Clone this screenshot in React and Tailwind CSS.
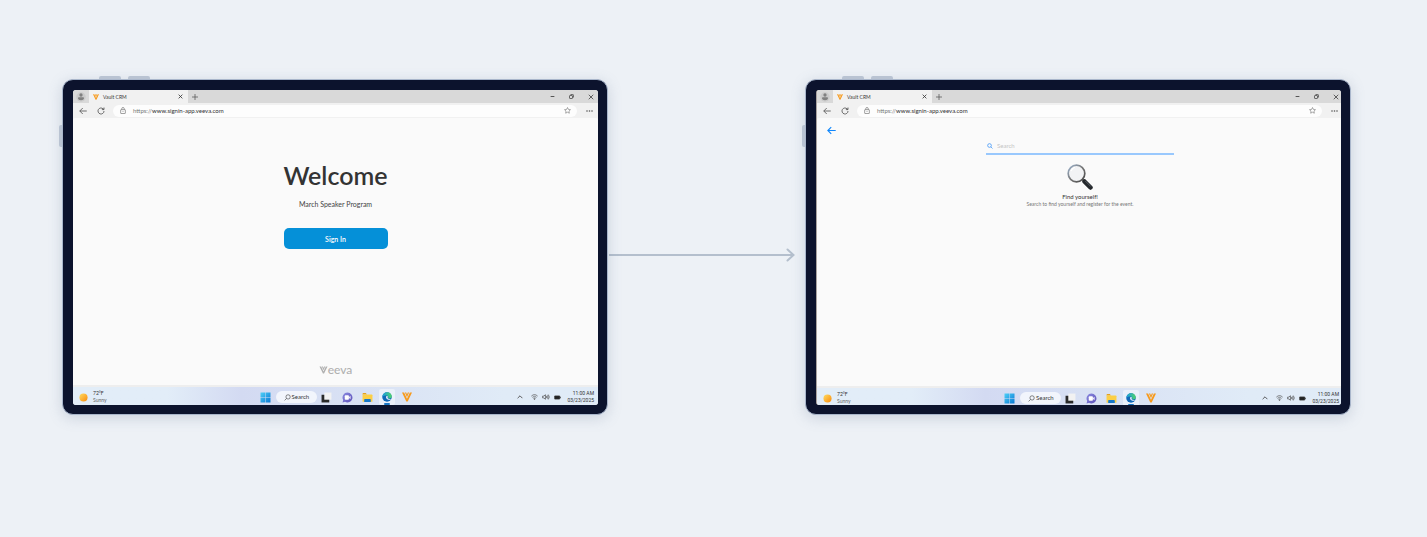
import React from "react";

const VeevaMark = ({ className }) => (
  <svg viewBox="0 0 20 20" className={className} fill="currentColor" aria-hidden="true">
    <path d="M0 1h4.200L10 13.500 15.800 1H20l-8.600 18H8.600z" />
    <path d="M5.800 1h2.700L10 4.800 11.500 1h2.700L10 10.500z" />
  </svg>
);

const ArrowLeft = ({ className }) => (
  <svg viewBox="0 0 16 16" className={className} fill="none" stroke="currentColor" aria-hidden="true">
    <path d="M15.500 8H1.500M7.500 2L1.500 8l6 6" />
  </svg>
);

const Lens = ({ className }) => (
  <svg viewBox="0 0 12 12" className={className} fill="none" stroke="currentColor" aria-hidden="true">
    <circle cx="5" cy="5" r="3.7" />
    <path d="M7.8 7.8L11 11" />
  </svg>
);

function TabBar() {
  return (
    <div className="flex h-[13px] items-stretch bg-[#d9d9d9] text-[#3a3a3a]">
      <button aria-label="Profile" className="flex w-4 items-center justify-center">
        <svg viewBox="0 0 20 20" className="size-[10px]">
          <circle cx="10" cy="10" r="9.5" fill="#cbcbcb" />
          <circle cx="10" cy="6" r="3.3" fill="#808080" />
          <path d="M4 12.5c0-1.5 1-2.2 2.4-2.2h7.2c1.4 0 2.4.7 2.4 2.2 0 2.6-2.6 4-6 4s-6-1.4-6-4z" fill="#808080" />
        </svg>
      </button>
      <div className="flex w-[99px] items-center bg-[#f1f1f1] pl-1">
        <VeevaMark className="size-[6px] text-[#f79a1c]" />
        <span className="ml-1 grow text-[5px] leading-[8px]">Vault CRM</span>
        <button aria-label="Close tab" className="mr-1 flex size-[7px] items-center justify-center">
          <svg viewBox="0 0 8 8" className="size-[5px]" stroke="#333" strokeWidth="1.3"><path d="M1 1l6 6M7 1L1 7" /></svg>
        </button>
      </div>
      <button aria-label="New tab" className="flex w-[14px] items-center justify-center">
        <svg viewBox="0 0 8 8" className="size-[6px]" stroke="#555" strokeWidth="1"><path d="M4 0v8M0 4h8" /></svg>
      </button>
      <div className="ml-auto flex items-center gap-3 pr-1">
        <button aria-label="Minimize" className="flex size-[7px] items-center justify-center">
          <svg viewBox="0 0 8 8" className="size-[5px]" stroke="#444" strokeWidth="1.4"><path d="M1 4h6" /></svg>
        </button>
        <button aria-label="Restore" className="flex size-[7px] items-center justify-center">
          <svg viewBox="0 0 10 10" className="size-[5px]" fill="none" stroke="#444" strokeWidth="1.5">
            <rect x="1" y="3" width="6" height="6" rx="1" /><path d="M3 1h4.500A1.500 1.500 0 019 2.500V7" />
          </svg>
        </button>
        <button aria-label="Close window" className="flex size-[7px] items-center justify-center">
          <svg viewBox="0 0 8 8" className="size-[6px]" stroke="#444" strokeWidth="1.1"><path d="M1 1l6 6M7 1L1 7" /></svg>
        </button>
      </div>
    </div>
  );
}

function AddressBar() {
  return (
    <div className="flex h-[15px] items-center bg-[#f1f1f1] text-[#555]">
      <button aria-label="Back" className="ml-[6px] flex size-2 items-center justify-center">
        <ArrowLeft className="size-2 stroke-[1.7px]" />
      </button>
      <button aria-label="Reload" className="ml-[9px] flex size-[9px] items-center justify-center">
        <svg viewBox="0 0 16 16" className="size-2" fill="none" stroke="currentColor" strokeWidth="1.7">
          <path d="M14 8a6 6 0 11-1.800-4.300L14 5M14 1v4.200h-4.200" />
        </svg>
      </button>
      <div className="ml-2 flex h-3 grow items-center rounded-full bg-[#fdfdfd] pl-[7px] pr-[6px]">
        <svg viewBox="0 0 14 16" className="h-[7px] w-[6px] shrink-0" fill="none" stroke="#777" strokeWidth="1.6" aria-hidden="true">
          <rect x="1.500" y="6" width="11" height="9" rx="1" />
          <path d="M4 6V4a3 3 0 016 0v2M7 9.500v2" />
        </svg>
        <span className="ml-[7px] grow text-[6px] leading-[8px] text-[#333]">
          <span className="text-[#777]">https://</span>www.signin-app.veeva.com
        </span>
        <button aria-label="Add to favorites" className="flex size-2 items-center justify-center">
          <svg viewBox="0 0 20 20" className="size-[7px]" fill="none" stroke="#777" strokeWidth="1.8">
            <path d="M10 1.500l2.600 5.400 5.900.8-4.300 4.100 1 5.900L10 14.900l-5.200 2.800 1-5.900L1.500 7.700l5.900-.8z" />
          </svg>
        </button>
      </div>
      <button aria-label="More" className="ml-2 mr-[5px] flex size-2 items-center justify-center">
        <svg viewBox="0 0 14 4" className="h-[2px] w-[7px]" fill="#555">
          <circle cx="2" cy="2" r="1.600" /><circle cx="7" cy="2" r="1.600" /><circle cx="12" cy="2" r="1.600" />
        </svg>
      </button>
    </div>
  );
}

function Taskbar() {
  return (
    <div className="grid h-5 grid-cols-[1fr_auto_1fr] items-center bg-linear-to-r from-[#e2edf8] from-18% via-[#d3daf2] via-32% to-[#e0ebf7] to-82% text-[#333]">
      <div className="flex items-center gap-[5px] pl-[6px]">
        <svg viewBox="0 0 20 20" className="size-[9px]" aria-hidden="true">
          <defs>
            <linearGradient id="sun" x1="0" y1="0" x2="1" y2="1">
              <stop offset="0" stopColor="#ffdc63" /><stop offset="1" stopColor="#f98a0c" />
            </linearGradient>
          </defs>
          <circle cx="10" cy="10" r="9" fill="url(#sun)" />
        </svg>
        <div className="text-[5px] leading-[7px]">
          <div>72°F</div>
          <div className="text-[#666]">Sunny</div>
        </div>
      </div>
      <div className="flex items-center">
        <button aria-label="Start">
          <svg viewBox="0 0 22 22" className="size-[11px]">
            <defs>
              <linearGradient id="win" x1="0" y1="0" x2="1" y2="1">
                <stop offset="0" stopColor="#4fd0f7" /><stop offset="1" stopColor="#0877d4" />
              </linearGradient>
            </defs>
            <path d="M1 1h9.500v9.500H1zM11.500 1H21v9.500h-9.500zM1 11.500h9.500V21H1zM11.500 11.500H21V21h-9.500z" fill="url(#win)" />
          </svg>
        </button>
        <button className="ml-[5px] flex h-3 w-[41px] items-center rounded-full bg-[#f2f5fc] pl-2 text-[6px] leading-[8px]">
          <Lens className="size-[7px] -scale-x-100 stroke-1" />
          <span className="ml-px">Search</span>
        </button>
        <button aria-label="Task view" className="ml-1">
          <svg viewBox="0 0 20 20" className="size-[11px]">
            <rect x="1" y="5" width="14" height="14" fill="#292929" />
            <rect x="6" y="1" width="13" height="13" fill="#f2f2f2" />
          </svg>
        </button>
        <button aria-label="Chat" className="ml-[10px]">
          <svg viewBox="0 0 20 20" className="size-[11px]">
            <defs>
              <linearGradient id="chat" x1="0" y1="0" x2="1" y2="1">
                <stop offset="0" stopColor="#8b8be0" /><stop offset="1" stopColor="#5b4fb8" />
              </linearGradient>
            </defs>
            <path d="M10 1a9 9 0 11-4.500 16.800L1 19l1.200-4.500A9 9 0 0110 1z" fill="url(#chat)" />
            <rect x="5" y="6" width="7.500" height="8" rx="1.500" fill="#fff" />
            <path d="M13 9l2.500-2v6L13 11z" fill="#fff" />
          </svg>
        </button>
        <button aria-label="File Explorer" className="ml-[9px]">
          <svg viewBox="0 0 20 20" className="size-[11px]">
            <path d="M1 3.500Q1 2 2.500 2H7l2 2.500H1z" fill="#e5a01b" />
            <path d="M1 4.500h16.500Q19 4.500 19 6v11.500H1z" fill="#fccf46" />
            <path d="M4 18v-4q0-1.500 1.500-1.500h9Q16 12.500 16 14v4z" fill="#1778c9" />
          </svg>
        </button>
        <button aria-label="Edge" className="ml-[6px] flex h-4 w-4 flex-col items-center justify-end rounded-xs bg-[#eaf0fa]">
          <svg viewBox="0 0 20 20" className="size-[10px]">
            <defs>
              <linearGradient id="edge" x1="0" y1="0" x2="1" y2="0">
                <stop offset="0" stopColor="#1b9de0" /><stop offset="1" stopColor="#4ed36a" />
              </linearGradient>
            </defs>
            <circle cx="10" cy="10" r="9.500" fill="#1068b8" />
            <path d="M.6 10C1 4.500 5 .5 10.500.5S19.500 4.500 19.500 8.500c0 3-2 4.500-4.500 4.500-2 0-3-1-2.500-2 .6-1.600-.5-4-3.500-4S2 7.500.6 10z" fill="url(#edge)" />
            <path d="M9 8c-2 2-1 6.500 3.500 7.500 2 .4 4 0 5.500-1-1-1-5 .3-6.500-2-.8-1.300.8-3-.5-4.500z" fill="#eaf0fa" />
          </svg>
          <span className="mt-px h-[2px] w-[6px] rounded-full bg-[#1976c5]" />
        </button>
        <button aria-label="Vault CRM" className="ml-[7px] text-[#f79a1c]">
          <VeevaMark className="size-[10px]" />
        </button>
      </div>
      <div className="flex items-center justify-end pr-1">
        <svg viewBox="0 0 10 6" className="h-[4px] w-[6px]" fill="none" stroke="#444" strokeWidth="1.400" aria-hidden="true"><path d="M1 5l4-4 4 4" /></svg>
        <svg viewBox="0 0 20 16" className="ml-2 h-[6px] w-[7px]" fill="none" stroke="#555" strokeWidth="2" aria-hidden="true">
          <path d="M1 5.500a13 13 0 0118 0M4 9a8.500 8.500 0 0112 0M7 12a4.500 4.500 0 016 0" /><circle cx="10" cy="14" r="1" fill="#555" />
        </svg>
        <svg viewBox="0 0 20 16" className="ml-1 h-[6px] w-[8px]" fill="none" stroke="#444" strokeWidth="1.800" aria-hidden="true">
          <path d="M1 5.500h3L8.500 2v12L4 10.500H1zM11 5.500a4 4 0 010 5M13.500 3.500a7 7 0 010 9M16 1.500a10 10 0 010 13" />
        </svg>
        <svg viewBox="0 0 20 12" className="ml-1 h-[5px] w-[7px]" aria-hidden="true">
          <rect x="1" y="1" width="16" height="10" rx="2" fill="#222" stroke="#555" /><rect x="17.500" y="4" width="2" height="4" fill="#333" />
        </svg>
        <div className="ml-[6px] text-right font-['Roboto',sans-serif] text-[5px] leading-[7px]">
          <div>11:00 AM</div>
          <div>03/23/2025</div>
        </div>
      </div>
    </div>
  );
}

function Tablet({ shift, children }) {
  return (
    <section className="relative min-w-0 flex-1 rounded-[11px] border border-[#a9b6cb] bg-[#0c132d] pt-[10px] pr-[9px] pb-[9px] pl-[10px] shadow-[0_3px_14px_rgba(100,120,150,0.25)]">
      <span className="absolute -top-1 left-9 h-[3px] w-[22px] rounded-t-xs bg-[#b9c3d2]" />
      <span className="absolute -top-1 left-[65px] h-[3px] w-[22px] rounded-t-xs bg-[#b9c3d2]" />
      <span className="absolute top-[45px] -left-1 h-[22px] w-[3px] rounded-l-xs bg-[#b9c3d2]" />
      <div className={"overflow-hidden rounded-[3px] bg-[#f1f1f1] " + (shift ? "border-l border-[#aaa3a0]" : "")}>
        <div className={shift ? "-mr-0.5 -mb-[3px]" : "-mb-0.5"}>
          <TabBar />
          <AddressBar />
          <div className={"flex flex-col items-center rounded-t-[2px] bg-[#fafafa] " + (shift ? "h-[268px]" : "h-[267px]")}>{children}</div>
          <div className="h-0.5 bg-[#eeeeee]" />
          <Taskbar />
        </div>
      </div>
    </section>
  );
}

export default function App() {
  return (
    <main className="flex min-h-screen items-start bg-[#edf1f6] pt-[79px] pr-[76px] pb-10 pl-[62px] font-['Lato',sans-serif]">
      <Tablet>
        <h1 className="mt-10 text-[25px] leading-[34px] font-semibold text-[#333]">Welcome</h1>
        <p className="mt-[7px] text-[7px] leading-[10px] text-[#444]">March Speaker Program</p>
        <button className="mt-[19px] h-[21px] w-[104px] rounded-[5px] bg-[#0590d8] text-[7px] leading-[10px] font-semibold text-white">Sign In</button>
        <div className="mt-auto mb-2 flex items-center text-[12px] leading-[14px] font-medium text-[#b0b0b0]">
          <VeevaMark className="h-2 w-[9px]" />
          <span>eeva</span>
        </div>
      </Tablet>

      <div className="mt-[169px] flex w-[197px] shrink-0 items-center pr-[10px] pl-px">
        <span className="-mr-[7px] h-0.5 grow bg-[#b4bfcd]" />
        <svg viewBox="0 0 9 14" className="h-[14px] w-[9px]" fill="none" stroke="#b4bfcd" strokeWidth="2" strokeLinecap="round" aria-hidden="true">
          <path d="M1.500 1.500L7.500 7l-6 5.500" />
        </svg>
      </div>

      <Tablet shift>
        <button aria-label="Go back" className="mt-2 ml-[10px] self-start text-[#1187fb]">
          <ArrowLeft className="size-[9px] stroke-2" />
        </button>
        <label className="mt-[4px] flex h-4 w-[188px] items-center border-b-2 border-[#99c8fd]">
          <Lens className="ml-px size-[6px] shrink-0 stroke-[1.5px] text-[#3b93f7]" />
          <input
            type="text"
            aria-label="Search"
            placeholder="Search"
            className="ml-1 w-full bg-transparent text-[6px] leading-[8px] outline-none placeholder:text-[#c4c4c4]"
          />
        </label>
        <svg viewBox="0 0 26 26" className="mt-[9px] size-[26px]" aria-hidden="true">
          <defs>
            <linearGradient id="rim" x1="0" y1="0" x2="1" y2="1">
              <stop offset="0" stopColor="#9db4cf" /><stop offset="0.500" stopColor="#777" /><stop offset="1" stopColor="#444" />
            </linearGradient>
          </defs>
          <path d="M15.500 15.500l3 3" stroke="#666" strokeWidth="2" />
          <path d="M17.500 17.500l6 6" stroke="#24282c" strokeWidth="4.500" strokeLinecap="round" />
          <path d="M18.500 17.200l5 5" stroke="#666b70" strokeWidth="0.800" strokeLinecap="round" />
          <circle cx="9.500" cy="9.500" r="8.300" fill="#f2f3f5" stroke="url(#rim)" strokeWidth="1.700" />
          <path d="M4 7a6.500 6.500 0 014-3.800" fill="none" stroke="#fff" strokeWidth="1.200" />
        </svg>
        <h2 className="mt-[3px] text-[6px] leading-[8px] text-[#333]">Find yourself!</h2>
        <p className="text-[5px] leading-[7px] text-[#777]">Search to find yourself and register for the event.</p>
      </Tablet>
    </main>
  );
}
